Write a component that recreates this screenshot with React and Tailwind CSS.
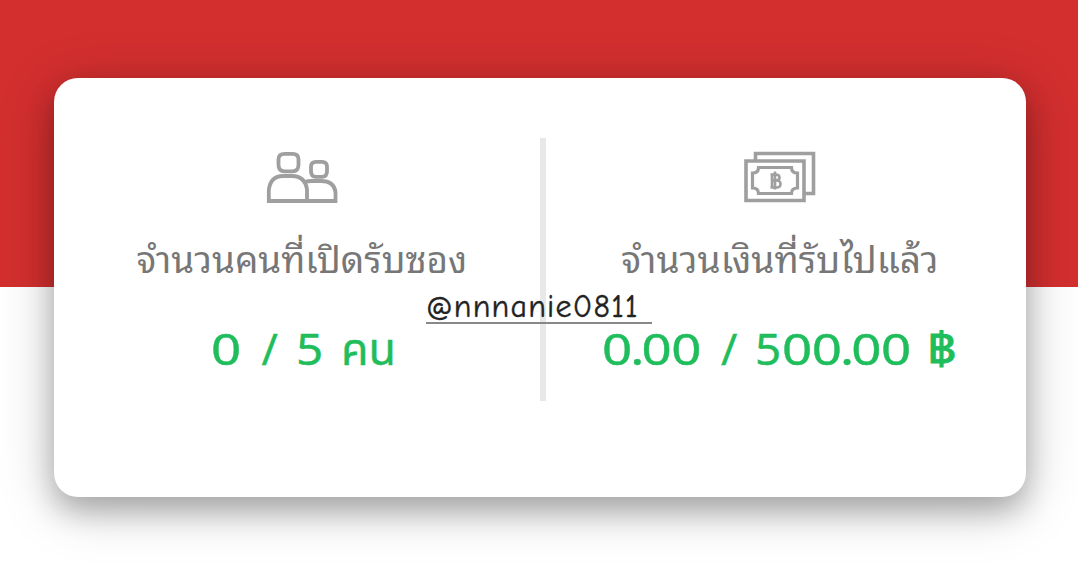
function PeopleIcon() {
  return (
    <svg width="72" height="52" viewBox="0 0 72 52" fill="none" stroke="#9f9f9f" strokeWidth="3.8">
      <path d="M18.500 2.800h8q6 0 6 5.500v5.500q0 6.500-6 6.500h-8q-6 0-6-6.500v-5.500q0-5.500 6-5.500Z" />
      <path d="M50 10.800h6q5 0 5 5v4.500q0 5.500-5 5.500h-6q-5 0-5-5.500v-4.500q0-5 5-5Z" />
      <path d="M2.800 50V39Q4.500 25 17 25h9q13 0 15 13.500v11.500Z" />
      <path d="M39 31q2.500-1 7-1h9q13 0 14.500 11v9H41" />
    </svg>
  );
}

function MoneyIcon() {
  return (
    <svg width="72" height="52" viewBox="0 0 72 52" fill="none" stroke="#9f9f9f" strokeWidth="3.6">
      <path d="M11.500 9V2.500H69.500V42.500H61" />
      <path d="M2 10H60V49.500H2Z" />
      <path d="M14.500 16.500H47.500c0 4 2 5.500 6 5.500v15c-4 0-6 1.500-6 5.500h-33c0-4-2-5.500-6-5.500V22c4 0 6-1.500 6-5.500Z" strokeWidth="3.200" />
      <path d="M28 23.500v13M26.500 23.500h5q4 0 4 3t-4 3h-3 4q4 0 4 3.500t-4 3.500h-6M31 20.500v18" strokeWidth="2.600" />
    </svg>
  );
}

function Stat({ icon, label, children, className, labelClass }) {
  return (
    <section className={`flex flex-col items-center pt-[13px] ${className}`}>
      {icon}
      <h2 className={`mt-[27px] h-[60px] whitespace-nowrap font-['Noto_Sans','Noto_Sans_Thai_Looped','Noto_Looped_Thai','Droid_Sans_Thai','Loma','Waree','Garuda','Noto_Serif_Thai',sans-serif] text-[36px] leading-[60px] text-[#777] ${labelClass}`}>{label}</h2>
      <div className="mt-[28px] flex h-[60px] items-center whitespace-nowrap pl-[2px] text-[44px] leading-[60px] text-[#1fbd5b] [-webkit-text-stroke:0.4px_#1fbd5b]">{children}</div>
    </section>
  );
}

function Zeros({ decimal, lead = "", className }) {
  return (
    <span className={`shrink-0 ${className}`}>
      <span className="inline-block origin-left scale-x-[1.2] tracking-[-0.4px]">
        {lead}
        <span className="tracking-[-1.7px]">0</span>
        {decimal && <span className="tracking-[-2.4px]">.</span>}
        {decimal}
      </span>
    </span>
  );
}

export default function App() {
  return (
    <main className="h-[564px] w-[1078px] overflow-hidden bg-[linear-gradient(#d32f2f_0_287px,#fff_287px)] px-[54px] pt-[78px] font-['Noto_Sans','Noto_Sans_Thai',sans-serif]">
      <div className="relative flex h-[419px] w-[972px] rounded-[24px] bg-white pt-[60px] shadow-[0_14px_28px_rgba(0,0,0,.23),0_10px_56px_rgba(0,0,0,.22)]">
        <Stat className="w-[486px] pl-[10px]" labelClass="scale-x-[1.022]" icon={<PeopleIcon />} label="จำนวนคนที่เปิดรับซอง">
          <Zeros className="w-[51px]" />
          <span className="w-[34px]">/</span>
          <span className="w-[45px] origin-left scale-x-[1.08]">5</span>
          <span className="w-[55px] origin-left scale-x-[1.02]">คน</span>
        </Stat>
        <div className="h-[263px] w-[6px] shrink-0 bg-[#e8e8e8]" />
        <Stat className="w-[468px]" labelClass="scale-x-[1.031]" icon={<MoneyIcon />} label="จำนวนเงินที่รับไปแล้ว">
          <Zeros decimal="00" className="w-[119px]" />
          <span className="w-[34px]">/</span>
          <span className="w-[27px] origin-left scale-x-[1.04]">5</span>
          <Zeros lead="0" decimal="00" className="w-[145px]" />
          <span className="w-[33px] origin-left scale-x-[1.15] [-webkit-text-stroke:0.8px_#1fbd5b]">฿</span>
        </Stat>
        <div className="absolute left-[372px] top-[208px] h-[38px] w-[226px] border-b-2 border-[#888] pt-[2px] text-[#222]">
          <span className="block whitespace-nowrap font-['Comic_Neue','Patrick_Hand',cursive] text-[32px] leading-[38px] tracking-[1.2px] [-webkit-text-stroke:0.4px_#222]">@nnnanie0811</span>
        </div>
      </div>
    </main>
  );
}
